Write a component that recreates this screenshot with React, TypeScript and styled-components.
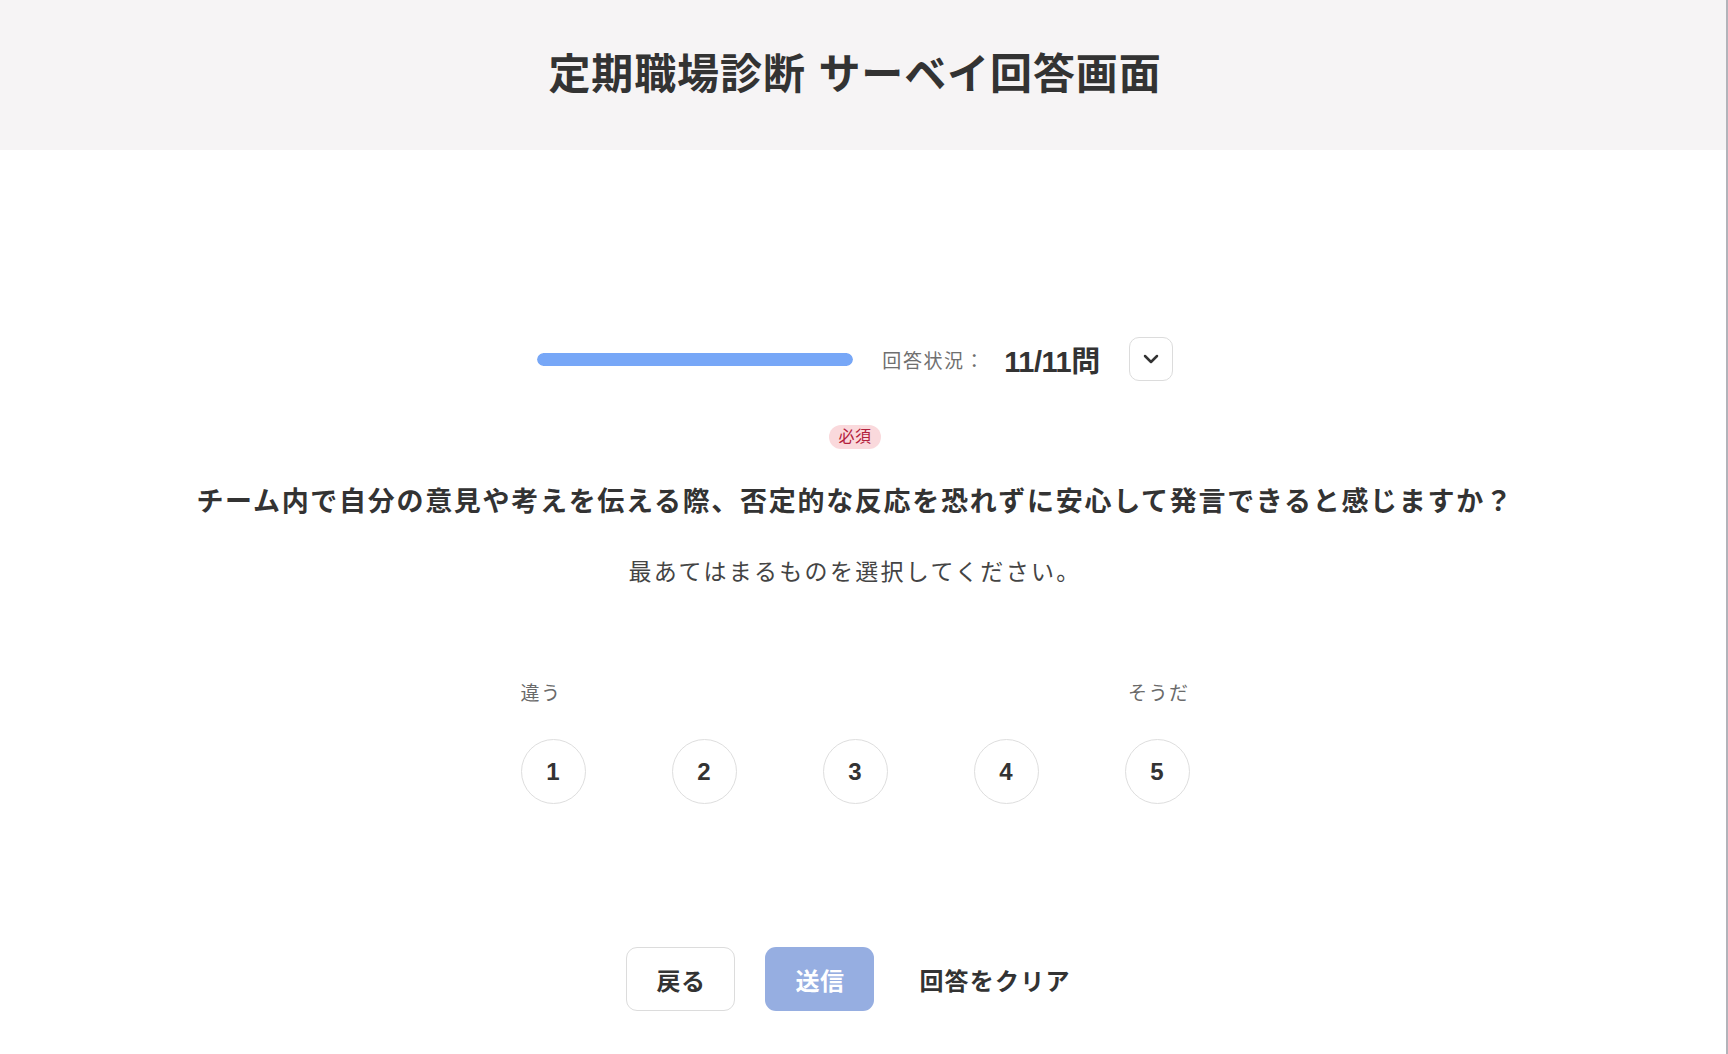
import React from "react";
import styled, { createGlobalStyle } from "styled-components";

const GlobalStyle = createGlobalStyle`
  html, body {
    margin: 0;
    padding: 0;
    background: #ffffff;
  }
  body {
    font-family: "Liberation Sans", "Noto Sans CJK JP", sans-serif;
    color: #333333;
    -webkit-font-smoothing: antialiased;
  }
  * {
    box-sizing: border-box;
  }
`;

const Page = styled.div`
  min-height: 100vh;
  border-right: 2px solid #b3b3ba;
  display: flex;
  flex-direction: column;
`;

const Header = styled.header`
  height: 150px;
  background: #f6f4f5;
  display: flex;
  align-items: center;
  justify-content: center;
  padding-right: 16px;
`;

const Title = styled.h1`
  margin: 0;
  font-size: 42px;
  font-weight: 700;
  letter-spacing: 0.9px;
  color: #333333;
  line-height: 1;
`;

const Main = styled.main`
  display: flex;
  flex-direction: column;
  align-items: center;
  padding: 187px 16px 40px 0;
`;

const ProgressRow = styled.div`
  display: flex;
  align-items: center;
  height: 44px;
`;

const Track = styled.div`
  width: 316px;
  height: 13px;
  border-radius: 7px;
  background: #e6ecf7;
  overflow: hidden;
  margin-right: 29px;
`;

const Fill = styled.div`
  height: 100%;
  border-radius: 7px;
  background: #77a7f7;
`;

const StatusLabel = styled.span`
  font-size: 19px;
  letter-spacing: 1.6px;
  color: #6f6f6f;
  margin-right: 19px;
`;

const StatusCount = styled.span`
  font-size: 29px;
  font-weight: 700;
  letter-spacing: -0.5px;
  color: #333333;
  margin-right: 29px;
`;

const ToggleButton = styled.button`
  width: 44px;
  height: 44px;
  border: 1px solid #dcdcdc;
  border-radius: 10px;
  background: #ffffff;
  display: flex;
  align-items: center;
  justify-content: center;
  padding: 0;
  cursor: pointer;
  color: #333333;
`;

const Badge = styled.span`
  margin-top: 44px;
  height: 24px;
  padding: 0 9px;
  border-radius: 12px;
  background: #fad9dc;
  color: #b3213c;
  font-size: 16px;
  line-height: 24px;
  letter-spacing: 0.5px;
`;

const Question = styled.h2`
  margin: 33px 0 0;
  font-size: 27px;
  font-weight: 700;
  letter-spacing: 1.7px;
  line-height: 40px;
  color: #333333;
  text-align: center;
`;

const Hint = styled.p`
  margin: 32px 0 0;
  font-size: 23px;
  letter-spacing: 2.3px;
  line-height: 36px;
  color: #444444;
`;

const Scale = styled.div`
  margin-top: 90px;
  width: 669px;
  display: flex;
  flex-direction: column;
  gap: 31px;
`;

const ScaleLabels = styled.div`
  display: flex;
  justify-content: space-between;
  font-size: 19px;
  letter-spacing: 1.5px;
  line-height: 28px;
  color: #6a6a6a;
`;

const ScaleOptions = styled.div`
  display: flex;
  justify-content: space-between;
`;

const Option = styled.button`
  width: 65px;
  height: 65px;
  border-radius: 50%;
  border: 1px solid #dedede;
  background: #ffffff;
  font-family: "Liberation Sans", "Noto Sans CJK JP", sans-serif;
  font-size: 24px;
  font-weight: 700;
  color: #333333;
  padding: 0;
  cursor: pointer;
`;

const Actions = styled.div`
  margin-top: 143px;
  display: flex;
  align-items: center;
  gap: 30px;
  margin-left: 2px;
`;

const ActionButton = styled.button<{ $variant: "outline" | "primary" | "text" }>`
  height: 64px;
  padding: 0 ${(p) => (p.$variant === "text" ? "14px" : "29px")};
  border-radius: 11px;
  font-family: "Liberation Sans", "Noto Sans CJK JP", sans-serif;
  font-size: 24px;
  font-weight: 700;
  letter-spacing: ${(p) => (p.$variant === "text" ? "1.2px" : "0.5px")};
  cursor: pointer;
  border: 1px solid
    ${(p) => (p.$variant === "outline" ? "#dcdcdc" : "transparent")};
  background: ${(p) => (p.$variant === "primary" ? "#96aee1" : "#ffffff")};
  color: ${(p) => (p.$variant === "primary" ? "#ffffff" : "#333333")};
`;

const ChevronDown = () => (
  <svg width="24" height="24" viewBox="0 0 24 24" fill="none" stroke="currentColor" strokeWidth="2.5" strokeLinecap="round" strokeLinejoin="round">
    <polyline points="6 9 12 15 18 9" />
  </svg>
);

const answered = 11;
const total = 11;

export default function App() {
  return (
    <>
      <GlobalStyle />
      <Page>
        <Header>
          <Title>定期職場診断 サーベイ回答画面</Title>
        </Header>
        <Main>
          <ProgressRow>
            <Track>
              <Fill style={{ width: `${(answered / total) * 100}%` }} />
            </Track>
            <StatusLabel>回答状況：</StatusLabel>
            <StatusCount>
              {answered}/{total}問
            </StatusCount>
            <ToggleButton aria-label="質問一覧">
              <ChevronDown />
            </ToggleButton>
          </ProgressRow>
          <Badge>必須</Badge>
          <Question>
            チーム内で自分の意見や考えを伝える際、否定的な反応を恐れずに安心して発言できると感じますか？
          </Question>
          <Hint>最あてはまるものを選択してください。</Hint>
          <Scale>
            <ScaleLabels>
              <span>違う</span>
              <span>そうだ</span>
            </ScaleLabels>
            <ScaleOptions>
              {[1, 2, 3, 4, 5].map((n) => (
                <Option key={n}>{n}</Option>
              ))}
            </ScaleOptions>
          </Scale>
          <Actions>
            <ActionButton $variant="outline">戻る</ActionButton>
            <ActionButton $variant="primary">送信</ActionButton>
            <ActionButton $variant="text">回答をクリア</ActionButton>
          </Actions>
        </Main>
      </Page>
    </>
  );
}
